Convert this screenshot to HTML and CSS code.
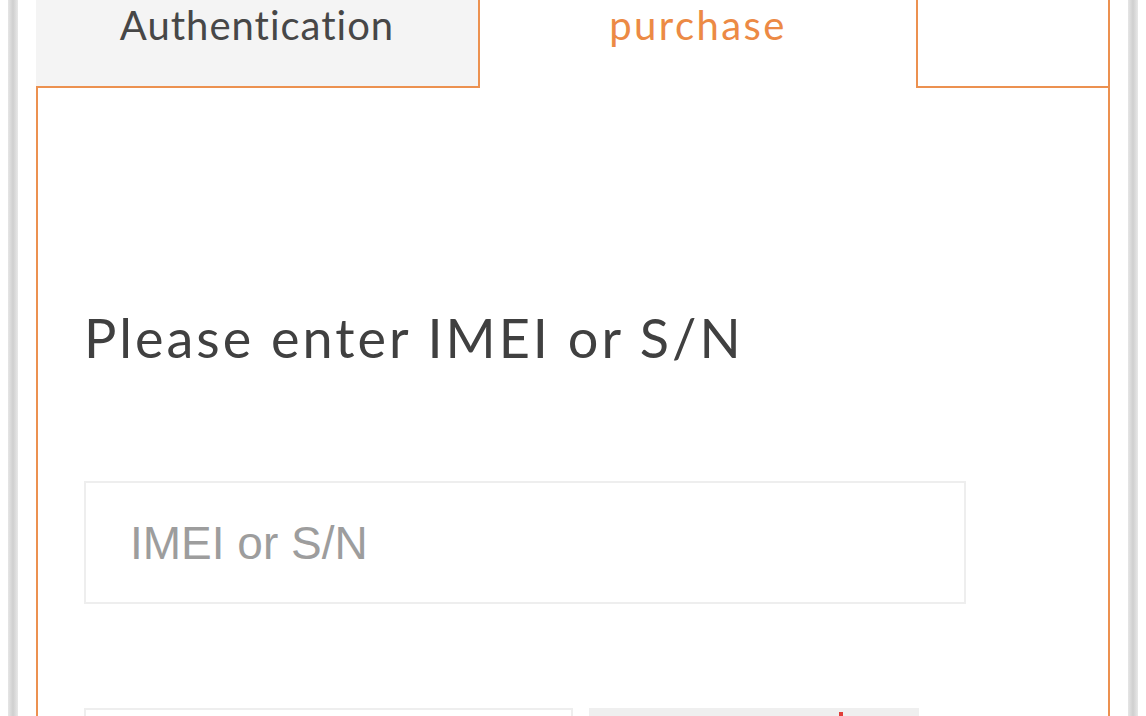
FILE: index.html
```html
<!DOCTYPE html>
<html lang="en">
<head>
<meta charset="utf-8">
<title>Purchase</title>
<link rel="stylesheet" href="styles.css">
</head>
<body>
<div class="device">
  <div class="edge"></div>
  <main class="card">
    <nav class="tabs">
      <div class="tab tab-auth">Authentication</div>
      <div class="tab tab-active">purchase</div>
      <div class="tab-fill"></div>
    </nav>
    <section class="panel">
      <h1 class="title">Please enter IMEI or S/N</h1>
      <div class="field"><span class="placeholder">IMEI or S/N</span></div>
      <div class="row">
        <div class="field small"></div>
        <div class="captcha"><span class="mark"></span></div>
      </div>
    </section>
  </main>
  <div class="edge"></div>
</div>
</body>
</html>
```
FILE: styles.css
```css
html, body {
  margin: 0;
  padding: 0;
  background: #fff;
  overflow: hidden;
  height: 716px;
}
body {
  font-family: Lato, "Open Sans", sans-serif;
  color: #444;
}
.device {
  display: flex;
  height: 716px;
  padding: 0 8px 0 8px;
  gap: 18px;
  overflow: hidden;
}
.edge {
  width: 10px;
  flex: none;
  background: linear-gradient(90deg, #e6e6e6 0%, #cfcfcf 50%, #e8e8e8 100%);
}
.card {
  flex: 1;
  display: flex;
  flex-direction: column;
  min-height: 0;
}
.tabs {
  display: flex;
  height: 88px;
  flex: none;
}
.tab {
  box-sizing: border-box;
  height: 88px;
  display: flex;
  justify-content: center;
  padding-top: 1px;
  font-size: 40px;
  line-height: 48px;
}
.tab-auth {
  width: 444px;
  background: #f4f4f4;
  border-right: 2px solid #ec9150;
  border-bottom: 2px solid #ec9150;
  color: #474747;
  letter-spacing: 1px;
}
.tab-active {
  width: 438px;
  border-right: 2px solid #ec9150;
  color: #ec8a45;
  letter-spacing: 2.4px;
}
.tab-fill {
  flex: 1;
  border-right: 2px solid #ec9150;
  border-bottom: 2px solid #ec9150;
}
.panel {
  flex: 1;
  min-height: 0;
  overflow: hidden;
  border-left: 2px solid #ec9150;
  border-right: 2px solid #ec9150;
  padding: 0 0 0 46px;
}
.title {
  margin: 218px 0 0;
  font-weight: 400;
  font-size: 54px;
  line-height: 64px;
  letter-spacing: 3px;
  color: #404040;
}
.field {
  box-sizing: border-box;
  width: 882px;
  height: 123px;
  margin-top: 111px;
  border: 2px solid #eeeeee;
  display: flex;
  align-items: center;
  padding-left: 44px;
}
.placeholder {
  font-family: "Liberation Sans", Arial, sans-serif;
  font-size: 46px;
  color: #9d9d9d;
}
.row {
  display: flex;
  gap: 16px;
  margin-top: 104px;
}
.row .field {
  margin-top: 0;
}
.field.small {
  width: 489px;
  height: 60px;
}
.captcha {
  width: 330px;
  height: 60px;
  background: #efefef;
  position: relative;
}
.mark {
  position: absolute;
  left: 250px;
  top: 4px;
  width: 4px;
  height: 6px;
  background: #e0403a;
}
```
